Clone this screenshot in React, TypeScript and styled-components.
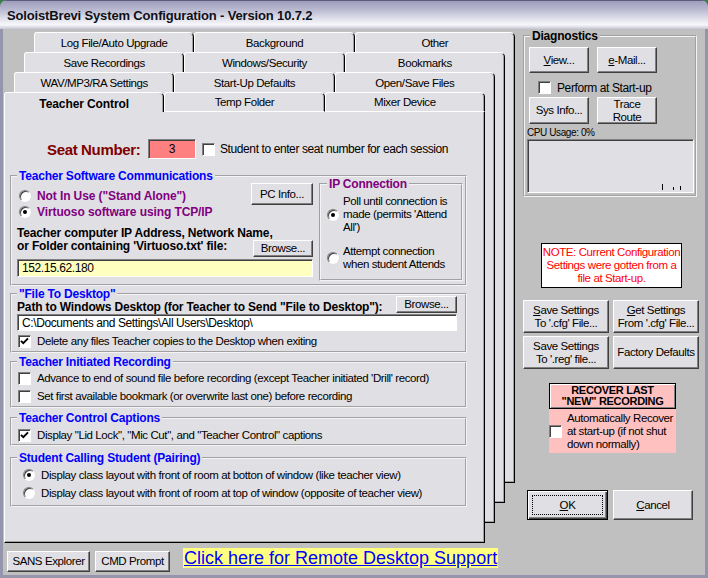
import styled, { createGlobalStyle, css } from "styled-components";

const FACE = "#e0dfe3";
const CLIENT = "#c0c0c0";

const GlobalStyle = createGlobalStyle`
  * { box-sizing: border-box; }
  html, body { margin: 0; padding: 0; background: #3a7d4a; }
  body {
    font-family: "Liberation Sans", Arial, sans-serif;
    font-size: 11.5px;
    letter-spacing: -0.4px;
    color: #000;
  }
`;

const raised = css`
  background: ${FACE};
  border: 1px solid;
  border-color: #fff #404040 #404040 #fff;
  box-shadow: inset -1px -1px 0 #808080;
`;

const sunken = css`
  border: 1px solid;
  border-color: #808080 #fff #fff #808080;
  box-shadow: inset 1px 1px 0 #404040;
`;

const Window = styled.div`
  width: 708px;
  height: 578px;
  display: flex;
  flex-direction: column;
  background: #9494ac;
  border-radius: 7px 7px 0 0;
  overflow: hidden;
`;

const TitleBar = styled.div`
  height: 29px;
  flex: none;
  display: flex;
  align-items: center;
  padding: 1px 0 0 7px;
  border-top: 1px solid #5c5c7c;
  background: linear-gradient(#9e9ebc 0%, #b8b8d0 30%, #e2e2ec 65%, #f7f7fa 85%, #c6c6d4 100%);
  font-size: 13px;
  font-weight: bold;
  letter-spacing: -0.15px;
  color: #101018;
`;

const Client = styled.div`
  flex: 1;
  display: flex;
  margin: 0 3px 3px 3px;
  background: ${CLIENT};
`;

const LeftCol = styled.div`
  width: 516px;
  flex: none;
  display: flex;
  flex-direction: column;
`;

const TabStack = styled.div`
  display: grid;
  margin-top: 3px;
  height: 511px;
`;

const Layer = styled.div<{ $depth: number }>`
  grid-area: 1 / 1;
  width: 481px;
  height: 451px;
  margin-left: ${(p) => 1 + 10 * p.$depth}px;
  margin-top: ${(p) => 60 - 20 * p.$depth}px;
  display: flex;
  flex-direction: column;
`;

const TabRow = styled.div`
  display: flex;
  height: 20px;
  flex: none;
`;

const Tab = styled.div<{ $active?: boolean; $front?: boolean }>`
  flex: 1;
  min-width: 0;
  background: ${FACE};
  border-top: 1px solid #fff;
  border-left: 1px solid #fff;
  border-right: 1px solid #000;
  box-shadow: inset -1px 0 0 #a0a0a0;
  border-radius: 3px 5px 0 0;
  display: flex;
  align-items: center;
  justify-content: center;
  white-space: nowrap;
  ${(p) =>
    p.$active
      ? css`
          font-weight: bold;
          font-size: 12px;
          letter-spacing: -0.1px;
          padding-top: 2px;
        `
      : p.$front
      ? css`
          border-bottom: 1px solid #fff;
        `
      : ""}
`;

const PageBody = styled.div`
  flex: 1;
  background: ${FACE};
  border-left: 1px solid #fff;
  border-right: 1px solid #000;
  border-bottom: 1px solid #000;
  box-shadow: inset -1px -1px 0 #a0a0a0;
  display: flex;
  flex-direction: column;
  padding-left: 5px;
`;

const SeatRow = styled.div`
  display: flex;
  align-items: center;
  height: 20px;
  margin: 27px 0 0 37px;
`;

const SeatLabel = styled.span`
  font-size: 15px;
  font-weight: bold;
  letter-spacing: -0.35px;
  color: #800000;
  width: 101px;
`;

const SeatInput = styled.div`
  ${sunken};
  width: 48px;
  height: 20px;
  background: #ff8080;
  display: flex;
  align-items: center;
  justify-content: center;
  font-size: 12px;
  margin-right: 6px;
`;

const SeatHint = styled.span`
  margin-left: 5px;
  font-size: 12px;
`;

const Group = styled.fieldset<{ $h: number; $mt: number }>`
  width: 457px;
  height: ${(p) => p.$h}px;
  margin: ${(p) => p.$mt}px 0 0 0;
  padding: 0 2px 0 5px;
  min-width: 0;
  border: 2px groove #f4f4f6;
  display: flex;
  flex-direction: column;
`;

const GroupTitle = styled.legend<{ $color?: string }>`
  padding: 0 2px;
  margin-left: 0;
  font-size: 12px;
  font-weight: bold;
  letter-spacing: -0.2px;
  line-height: 14px;
  color: ${(p) => p.$color ?? "#0000ff"};
`;

const CommsBody = styled.div`
  display: flex;
`;

const CommsLeft = styled.div`
  width: 296px;
  display: flex;
  flex-direction: column;
`;

const CommsTop = styled.div`
  display: flex;
  justify-content: space-between;
  align-items: flex-start;
  height: 37px;
`;

const RadioList = styled.div`
  display: flex;
  flex-direction: column;
  margin-top: 5px;
  padding-left: 1px;
`;

const OptionRow = styled.label<{ $indent?: number }>`
  display: flex;
  align-items: center;
  height: 16px;
  gap: 6px;
  margin-left: ${(p) => p.$indent ?? 1}px;
  white-space: nowrap;
`;

const PurpleText = styled.span`
  color: #800080;
  font-weight: bold;
  font-size: 12px;
  letter-spacing: -0.1px;
`;

const BoldText = styled.span`
  font-weight: bold;
  font-size: 12px;
  letter-spacing: -0.15px;
  line-height: 13px;
  white-space: nowrap;
`;

/* label and Browse share one cell: the button sits under the label's first line */
const AddressRow = styled.div`
  display: grid;
  margin-top: 7px;
  height: 30px;
  & > * {
    grid-area: 1 / 1;
  }
`;

const AddressBrowse = styled.div`
  justify-self: end;
  align-self: end;
`;

const TextField = styled.div<{ $w: number; $h: number; $bg: string; $mt: number }>`
  ${sunken};
  width: ${(p) => p.$w}px;
  height: ${(p) => p.$h}px;
  margin-top: ${(p) => p.$mt}px;
  background: ${(p) => p.$bg};
  display: flex;
  align-items: center;
  padding-left: 4px;
  font-size: 12px;
  white-space: nowrap;
`;

const IpGroup = styled.fieldset`
  width: 144px;
  height: 104px;
  margin: -6px 0 0 6px;
  padding: 0 0 0 6px;
  min-width: 0;
  border: 2px groove #f4f4f6;
  display: flex;
  flex-direction: column;
`;

const IpOption = styled.label<{ $mt: number }>`
  display: flex;
  align-items: center;
  gap: 4px;
  margin-top: ${(p) => p.$mt}px;
  line-height: 13px;
`;

const PathRow = styled.div`
  display: flex;
  align-items: flex-end;
  justify-content: space-between;
  width: 440px;
  height: 16px;
  margin-top: -4px;
`;

const PathLabel = styled(BoldText)`
  line-height: 12px;
`;

const StackCol = styled.div<{ $mt: number }>`
  display: flex;
  flex-direction: column;
  gap: 2px;
  margin-top: ${(p) => p.$mt}px;
`;

const Button = styled.button<{ $w: number; $h: number }>`
  ${raised};
  width: ${(p) => p.$w}px;
  height: ${(p) => p.$h}px;
  flex: none;
  padding: 0;
  font: inherit;
  letter-spacing: inherit;
  color: #000;
  display: flex;
  align-items: center;
  justify-content: center;
  text-align: center;
  line-height: 13px;
`;

const DefaultButton = styled(Button)`
  border: 1px solid #000;
  box-shadow: inset 1px 1px 0 #fff, inset -1px -1px 0 #404040, inset -2px -2px 0 #808080;
  position: relative;
  &::after {
    content: "";
    position: absolute;
    inset: 4px;
    border: 1px dotted #000;
  }
`;

const Box = styled.span`
  ${sunken};
  width: 13px;
  height: 13px;
  flex: none;
  background: #fff;
  display: inline-flex;
  align-items: center;
  justify-content: center;
`;

const RadioDot = styled.span<{ $on?: boolean }>`
  width: 12px;
  height: 12px;
  flex: none;
  border-radius: 50%;
  background: #fff;
  border: 1px solid;
  border-color: #808080 #fff #fff #808080;
  box-shadow: inset 1px 1px 0 #404040, 0 0 0 0.5px #d8d8dc;
  position: relative;
  ${(p) =>
    p.$on &&
    css`
      &::after {
        content: "";
        position: absolute;
        left: 3px;
        top: 3px;
        width: 4px;
        height: 4px;
        border-radius: 50%;
        background: #000;
      }
    `}
`;

const BottomBar = styled.div`
  display: flex;
  align-items: flex-start;
  margin-top: 5px;
  padding-left: 4px;
`;

const BarButton = styled(Button)`
  margin-top: 3px;
  & + & {
    margin-left: 5px;
  }
`;

const SupportLink = styled.a`
  margin-left: 13px;
  height: 20px;
  line-height: 20px;
  padding: 0 1px;
  background: #ffff80;
  color: #0000ff;
  text-decoration: underline;
  font-size: 18px;
  letter-spacing: 0;
  white-space: nowrap;
`;

const RightCol = styled.div`
  width: 186px;
  flex: none;
  display: flex;
  flex-direction: column;
  padding-left: 4px;
`;

const DiagGroup = styled.fieldset`
  width: 174px;
  height: 168px;
  margin: 0;
  padding: 0 0 0 4px;
  min-width: 0;
  border: 2px groove #f4f4f6;
  display: flex;
  flex-direction: column;
`;

const DiagTitle = styled.legend`
  padding: 0 2px;
  margin-left: 1px;
  font-size: 12px;
  font-weight: bold;
  letter-spacing: -0.2px;
  line-height: 14px;
`;

const ButtonPair = styled.div<{ $mt: number }>`
  display: flex;
  gap: 8px;
  margin-top: ${(p) => p.$mt}px;
`;

const StartupRow = styled.label`
  display: flex;
  align-items: center;
  gap: 6px;
  margin: 8px 0 0 9px;
  height: 13px;
  font-size: 12px;
`;

const CpuLabel = styled.div`
  font-size: 10px;
  letter-spacing: -0.4px;
  margin: 3px 0 0 -2px;
  height: 12px;
  line-height: 12px;
`;

const CpuGraph = styled.div`
  ${sunken};
  width: 167px;
  height: 54px;
  margin-left: -2px;
  background: ${FACE};
  display: flex;
  align-items: flex-end;
  justify-content: flex-end;
  padding: 0 8px 2px 0;
`;

const Note = styled.div`
  width: 141px;
  height: 45px;
  margin: 46px auto 0 18px;
  border: 1px solid #000;
  background: #fff;
  color: #ff0000;
  text-align: center;
  line-height: 13px;
  padding-top: 2px;
`;

const SettingsGrid = styled.div`
  display: grid;
  grid-template-columns: 86px 86px;
  grid-auto-rows: 33px;
  column-gap: 4px;
  row-gap: 3px;
  margin-top: 12px;
`;

const Recover = styled.div`
  width: 127px;
  margin: 14px 0 0 26px;
  display: flex;
  flex-direction: column;
`;

const RecoverButton = styled.div`
  height: 26px;
  background: #ffc0c0;
  border: 1px solid #000;
  box-shadow: inset 1px 1px 0 #fff, inset -1px -1px 0 #808080;
  display: flex;
  align-items: center;
  justify-content: center;
  text-align: center;
  font-size: 11px;
  font-weight: bold;
  line-height: 11px;
  letter-spacing: -0.3px;
`;

const RecoverPanel = styled.label`
  height: 44px;
  background: #ffc0c0;
  display: flex;
  align-items: center;
  line-height: 13px;
  gap: 5px;
`;

const OkRow = styled.div`
  display: flex;
  gap: 5px;
  margin: 37px 0 0 4px;
`;

function Check({ on }: { on?: boolean }) {
  return (
    <Box>
      {on && (
        <svg width="9" height="9" viewBox="0 0 9 9">
          <polyline points="1,3.8 3.3,6.2 8,1.4" fill="none" stroke="#000" strokeWidth="1.9" />
        </svg>
      )}
    </Box>
  );
}

const tabRows = [
  ["Log File/Auto Upgrade", "Background", "Other"],
  ["Save Recordings", "Windows/Security", "Bookmarks"],
  ["WAV/MP3/RA Settings", "Start-Up Defaults", "Open/Save Files"],
];

export default function App() {
  return (
    <>
      <GlobalStyle />
      <Window>
        <TitleBar>SoloistBrevi System Configuration - Version 10.7.2</TitleBar>
        <Client>
          <LeftCol>
            <TabStack>
              {tabRows.map((row, i) => (
                <Layer key={row[0]} $depth={3 - i}>
                  <TabRow>
                    {row.map((t) => (
                      <Tab key={t}>{t}</Tab>
                    ))}
                  </TabRow>
                  <PageBody />
                </Layer>
              ))}
              <Layer $depth={0}>
                <TabRow>
                  <Tab $active>Teacher Control</Tab>
                  <Tab $front>Temp Folder</Tab>
                  <Tab $front>Mixer Device</Tab>
                </TabRow>
                <PageBody>
                  <SeatRow>
                    <SeatLabel>Seat Number:</SeatLabel>
                    <SeatInput>3</SeatInput>
                    <Check />
                    <SeatHint>Student to enter seat number for each session</SeatHint>
                  </SeatRow>

                  <Group $h={117} $mt={10}>
                    <GroupTitle>Teacher Software Communications</GroupTitle>
                    <CommsBody>
                      <CommsLeft>
                        <CommsTop>
                          <RadioList>
                            <OptionRow>
                              <RadioDot />
                              <PurpleText>Not In Use ("Stand Alone")</PurpleText>
                            </OptionRow>
                            <OptionRow>
                              <RadioDot $on />
                              <PurpleText>Virtuoso software using TCP/IP</PurpleText>
                            </OptionRow>
                          </RadioList>
                          <Button $w={62} $h={22}>PC Info...</Button>
                        </CommsTop>
                        <AddressRow>
                          <BoldText>
                            Teacher computer IP Address, Network Name,
                            <br />
                            or Folder containing 'Virtuoso.txt' file:
                          </BoldText>
                          <AddressBrowse>
                            <Button $w={60} $h={17}>Browse...</Button>
                          </AddressBrowse>
                        </AddressRow>
                        <TextField $w={296} $h={18} $bg="#ffffc0" $mt={2}>
                          152.15.62.180
                        </TextField>
                      </CommsLeft>
                      <IpGroup>
                        <GroupTitle $color="#800080">IP Connection</GroupTitle>
                        <IpOption $mt={4}>
                          <RadioDot $on />
                          <span>
                            Poll until connection is
                            <br />
                            made (permits 'Attend
                            <br />
                            All')
                          </span>
                        </IpOption>
                        <IpOption $mt={11}>
                          <RadioDot />
                          <span>
                            Attempt connection
                            <br />
                            when student Attends
                          </span>
                        </IpOption>
                      </IpGroup>
                    </CommsBody>
                  </Group>

                  <Group $h={66} $mt={1}>
                    <GroupTitle>"File To Desktop"</GroupTitle>
                    <PathRow>
                      <PathLabel>Path to Windows Desktop (for Teacher to Send "File to Desktop"):</PathLabel>
                      <Button $w={61} $h={17}>Browse...</Button>
                    </PathRow>
                    <TextField $w={440} $h={17} $bg="#ffffff" $mt={1}>
                      C:\Documents and Settings\All Users\Desktop\
                    </TextField>
                    <StackCol $mt={2}>
                      <OptionRow>
                        <Check on />
                        <span>Delete any files Teacher copies to the Desktop when exiting</span>
                      </OptionRow>
                    </StackCol>
                  </Group>

                  <Group $h={53} $mt={2}>
                    <GroupTitle>Teacher Initiated Recording</GroupTitle>
                    <StackCol $mt={1}>
                      <OptionRow>
                        <Check />
                        <span>Advance to end of sound file before recording (except Teacher initiated 'Drill' record)</span>
                      </OptionRow>
                      <OptionRow>
                        <Check />
                        <span>Set first available bookmark (or overwrite last one) before recording</span>
                      </OptionRow>
                    </StackCol>
                  </Group>

                  <Group $h={35} $mt={3}>
                    <GroupTitle>Teacher Control Captions</GroupTitle>
                    <StackCol $mt={2}>
                      <OptionRow>
                        <Check on />
                        <span>Display "Lid Lock", "Mic Cut", and "Teacher Control" captions</span>
                      </OptionRow>
                    </StackCol>
                  </Group>

                  <Group $h={56} $mt={5}>
                    <GroupTitle>Student Calling Student (Pairing)</GroupTitle>
                    <StackCol $mt={2}>
                      <OptionRow $indent={6}>
                        <RadioDot $on />
                        <span>Display class layout with front of room at botton of window (like teacher view)</span>
                      </OptionRow>
                      <OptionRow $indent={6}>
                        <RadioDot />
                        <span>Display class layout with front of room at top of window (opposite of teacher view)</span>
                      </OptionRow>
                    </StackCol>
                  </Group>
                </PageBody>
              </Layer>
            </TabStack>

            <BottomBar>
              <BarButton $w={83} $h={21}>SANS Explorer</BarButton>
              <BarButton $w={75} $h={21}>CMD Prompt</BarButton>
              <SupportLink>Click here for Remote Desktop Support</SupportLink>
            </BottomBar>
          </LeftCol>

          <RightCol>
            <DiagGroup>
              <DiagTitle>Diagnostics</DiagTitle>
              <ButtonPair $mt={4}>
                <Button $w={60} $h={26}>
                  <span><u>V</u>iew...</span>
                </Button>
                <Button $w={60} $h={26}>
                  <span><u>e</u>-Mail...</span>
                </Button>
              </ButtonPair>
              <StartupRow>
                <Check />
                <span>Perform at Start-up</span>
              </StartupRow>
              <ButtonPair $mt={3}>
                <Button $w={60} $h={27}>Sys Info...</Button>
                <Button $w={60} $h={27}>
                  Trace
                  <br />
                  Route
                </Button>
              </ButtonPair>
              <CpuLabel>CPU Usage: 0%</CpuLabel>
              <CpuGraph>
                <svg width="30" height="6" viewBox="0 0 30 6">
                  <rect x="7" y="0" width="1" height="6" fill="#000" />
                  <rect x="18" y="3" width="1" height="3" fill="#000" />
                  <rect x="25" y="2" width="1" height="4" fill="#000" />
                </svg>
              </CpuGraph>
            </DiagGroup>

            <Note>
              NOTE: Current Configuration
              <br />
              Settings were gotten from a
              <br />
              file at Start-up.
            </Note>

            <SettingsGrid>
              <Button $w={86} $h={33}>
                <span>
                  <u>S</u>ave Settings
                  <br />
                  To '.cfg' File...
                </span>
              </Button>
              <Button $w={86} $h={33}>
                <span>
                  <u>G</u>et Settings
                  <br />
                  From '.cfg' File...
                </span>
              </Button>
              <Button $w={86} $h={33}>
                <span>
                  Save Settings
                  <br />
                  To '.reg' file...
                </span>
              </Button>
              <Button $w={86} $h={33}>Factory Defaults</Button>
            </SettingsGrid>

            <Recover>
              <RecoverButton>
                RECOVER LAST
                <br />
                "NEW" RECORDING
              </RecoverButton>
              <RecoverPanel>
                <Check />
                <span>
                  Automatically Recover
                  <br />
                  at start-up (if not shut
                  <br />
                  down normally)
                </span>
              </RecoverPanel>
            </Recover>

            <OkRow>
              <DefaultButton $w={81} $h={30}>
                <span><u>O</u>K</span>
              </DefaultButton>
              <Button $w={80} $h={30}>
                <span><u>C</u>ancel</span>
              </Button>
            </OkRow>
          </RightCol>
        </Client>
      </Window>
    </>
  );
}
